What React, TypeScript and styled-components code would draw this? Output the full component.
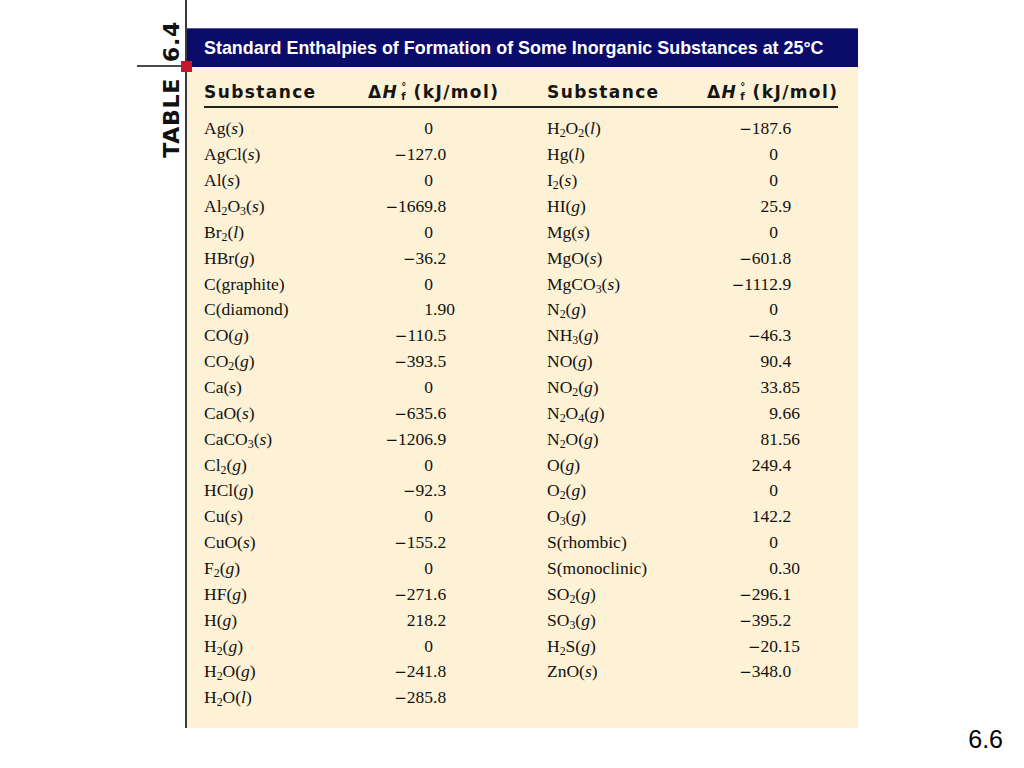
import React from "react";
import styled, { createGlobalStyle } from "styled-components";

const GlobalStyle = createGlobalStyle`
  html, body { margin: 0; padding: 0; background: #ffffff; }
  body { width: 1024px; height: 768px; overflow: hidden; }
  * { box-sizing: border-box; }
`;

const Page = styled.div`
  display: flex;
  height: 768px;
  padding-left: 137px;
`;

const Sidebar = styled.div`
  position: relative;
  width: 50px;
  height: 728px;
  border-right: 2px solid #3a3a3a;
  display: flex;
  flex-direction: column;
`;

const SidebarTop = styled.div`
  height: 67px;
  border-bottom: 2px solid #4a4a4a;
  display: flex;
  flex-direction: column;
  justify-content: flex-end;
  align-items: flex-end;
  padding: 0 2px 3px 0;
`;

const SidebarBottom = styled.div`
  display: flex;
  flex-direction: column;
  align-items: flex-end;
  padding: 11px 2px 0 0;
`;

const VerticalLabel = styled.span`
  writing-mode: vertical-rl;
  transform: rotate(180deg);
  font-family: "DejaVu Sans", sans-serif;
  font-weight: bold;
  font-size: 22px;
  line-height: 1;
  color: #111;
  letter-spacing: 0.7px;
`;

const RedMark = styled.span`
  position: absolute;
  right: -7px;
  top: 61px;
  width: 11px;
  height: 11px;
  background: #c4182a;
`;

const Main = styled.div`
  width: 671px;
  padding-top: 28px;
  display: flex;
  flex-direction: column;
`;

const TitleBar = styled.div`
  height: 39px;
  background: #0b0b6c;
  border-top: 1px solid #5b5b95;
  color: #ffffff;
  display: flex;
  align-items: center;
  padding-left: 17px;
  font-family: "Liberation Sans", Arial, sans-serif;
  font-weight: bold;
  font-size: 17.9px;
`;

const Panel = styled.div`
  height: 661px;
  background: #fdf2d6;
  padding: 13px 20px 0 17px;
`;

const HeaderRow = styled.div`
  display: grid;
  grid-template-columns: 164px 179px 160px 1fr;
  height: 28px;
  align-items: center;
  border-bottom: 2px solid #222;
  padding-bottom: 2px;
`;

const HeaderCell = styled.div`
  font-family: "DejaVu Sans", sans-serif;
  font-weight: bold;
  font-size: 17px;
  letter-spacing: 1.4px;
  color: #151515;
  white-space: nowrap;
  line-height: 1;
`;

const ItalicH = styled.span`
  font-style: italic;
`;

const Stack = styled.span`
  display: inline-flex;
  flex-direction: column;
  align-items: flex-start;
  font-size: 10px;
  line-height: 1;
  vertical-align: text-top;
  margin-left: 3px;
  letter-spacing: 0;
`;

const Body = styled.div`
  display: grid;
  grid-template-columns: 343px 1fr;
  padding-top: 8px;
`;

const Column = styled.div`
  display: flex;
  flex-direction: column;
`;

const Row = styled.div<{ $int: number }>`
  display: grid;
  grid-template-columns: 150px ${(p) => p.$int}px auto;
  height: 25.86px;
  align-items: center;
  font-family: "Liberation Serif", "Times New Roman", serif;
  font-size: 17.5px;
  color: #111;
  white-space: nowrap;
`;

const Name = styled.span``;

const IntPart = styled.span`
  text-align: right;
`;

const Minus = styled.span`
  font-family: "DejaVu Serif", serif;
  font-size: 15px;
`;

const FracPart = styled.span`
  text-align: left;
`;

const Sub = styled.sub`
  font-size: 0.68em;
  vertical-align: -0.28em;
  line-height: 0;
`;

const State = styled.i`
  font-style: italic;
`;

const SlideNo = styled.div`
  flex: 1;
  display: flex;
  justify-content: flex-end;
  align-items: flex-end;
  padding: 0 21px 14px 0;
  font-family: "Liberation Sans", Arial, sans-serif;
  font-size: 25px;
  color: #000;
`;

type Entry = [string, string];

const left: Entry[] = [
  ["Ag(s)", "0"],
  ["AgCl(s)", "−127.0"],
  ["Al(s)", "0"],
  ["Al2O3(s)", "−1669.8"],
  ["Br2(l)", "0"],
  ["HBr(g)", "−36.2"],
  ["C(graphite)", "0"],
  ["C(diamond)", "1.90"],
  ["CO(g)", "−110.5"],
  ["CO2(g)", "−393.5"],
  ["Ca(s)", "0"],
  ["CaO(s)", "−635.6"],
  ["CaCO3(s)", "−1206.9"],
  ["Cl2(g)", "0"],
  ["HCl(g)", "−92.3"],
  ["Cu(s)", "0"],
  ["CuO(s)", "−155.2"],
  ["F2(g)", "0"],
  ["HF(g)", "−271.6"],
  ["H(g)", "218.2"],
  ["H2(g)", "0"],
  ["H2O(g)", "−241.8"],
  ["H2O(l)", "−285.8"],
];

const right: Entry[] = [
  ["H2O2(l)", "−187.6"],
  ["Hg(l)", "0"],
  ["I2(s)", "0"],
  ["HI(g)", "25.9"],
  ["Mg(s)", "0"],
  ["MgO(s)", "−601.8"],
  ["MgCO3(s)", "−1112.9"],
  ["N2(g)", "0"],
  ["NH3(g)", "−46.3"],
  ["NO(g)", "90.4"],
  ["NO2(g)", "33.85"],
  ["N2O4(g)", "9.66"],
  ["N2O(g)", "81.56"],
  ["O(g)", "249.4"],
  ["O2(g)", "0"],
  ["O3(g)", "142.2"],
  ["S(rhombic)", "0"],
  ["S(monoclinic)", "0.30"],
  ["SO2(g)", "−296.1"],
  ["SO3(g)", "−395.2"],
  ["H2S(g)", "−20.15"],
  ["ZnO(s)", "−348.0"],
];

function Formula({ text }: { text: string }) {
  const idx = text.indexOf("(");
  const formula = idx >= 0 ? text.slice(0, idx) : text;
  const phase = idx >= 0 ? text.slice(idx + 1, text.length - 1) : "";
  const parts: React.ReactNode[] = [];
  const re = /(\d+)|([^\d]+)/g;
  let m: RegExpExecArray | null;
  let k = 0;
  while ((m = re.exec(formula))) {
    if (m[1]) parts.push(<Sub key={k++}>{m[1]}</Sub>);
    else parts.push(<React.Fragment key={k++}>{m[2]}</React.Fragment>);
  }
  const italic = phase.length === 1;
  return (
    <Name>
      {parts}
      {idx >= 0 && (
        <>
          (
          {italic ? <State>{phase}</State> : phase}
          )
        </>
      )}
    </Name>
  );
}

function DataRow({ entry, intWidth }: { entry: Entry; intWidth: number }) {
  const [name, value] = entry;
  const dot = value.indexOf(".");
  const int = dot >= 0 ? value.slice(0, dot) : value;
  const frac = dot >= 0 ? value.slice(dot) : "";
  const neg = int.startsWith("−");
  return (
    <Row $int={intWidth}>
      <Formula text={name} />
      <IntPart>
        {neg && <Minus>−</Minus>}
        {neg ? int.slice(1) : int}
      </IntPart>
      <FracPart>{frac}</FracPart>
    </Row>
  );
}

function DeltaH() {
  return (
    <>
      Δ<ItalicH>H</ItalicH>
      <Stack>
        <span>°</span>
        <span>f</span>
      </Stack>{" "}
      (kJ/mol)
    </>
  );
}

export default function App() {
  return (
    <>
      <GlobalStyle />
      <Page>
        <Sidebar>
          <SidebarTop>
            <VerticalLabel>6.4</VerticalLabel>
          </SidebarTop>
          <SidebarBottom>
            <VerticalLabel>TABLE</VerticalLabel>
          </SidebarBottom>
          <RedMark />
        </Sidebar>
        <Main>
          <TitleBar>
            Standard Enthalpies of Formation of Some Inorganic Substances at 25°C
          </TitleBar>
          <Panel>
            <HeaderRow>
              <HeaderCell>Substance</HeaderCell>
              <HeaderCell>
                <DeltaH />
              </HeaderCell>
              <HeaderCell>Substance</HeaderCell>
              <HeaderCell>
                <DeltaH />
              </HeaderCell>
            </HeaderRow>
            <Body>
              <Column>
                {left.map((e) => (
                  <DataRow key={e[0]} entry={e} intWidth={79} />
                ))}
              </Column>
              <Column>
                {right.map((e) => (
                  <DataRow key={e[0]} entry={e} intWidth={81} />
                ))}
              </Column>
            </Body>
          </Panel>
        </Main>
        <SlideNo>6.6</SlideNo>
      </Page>
    </>
  );
}
